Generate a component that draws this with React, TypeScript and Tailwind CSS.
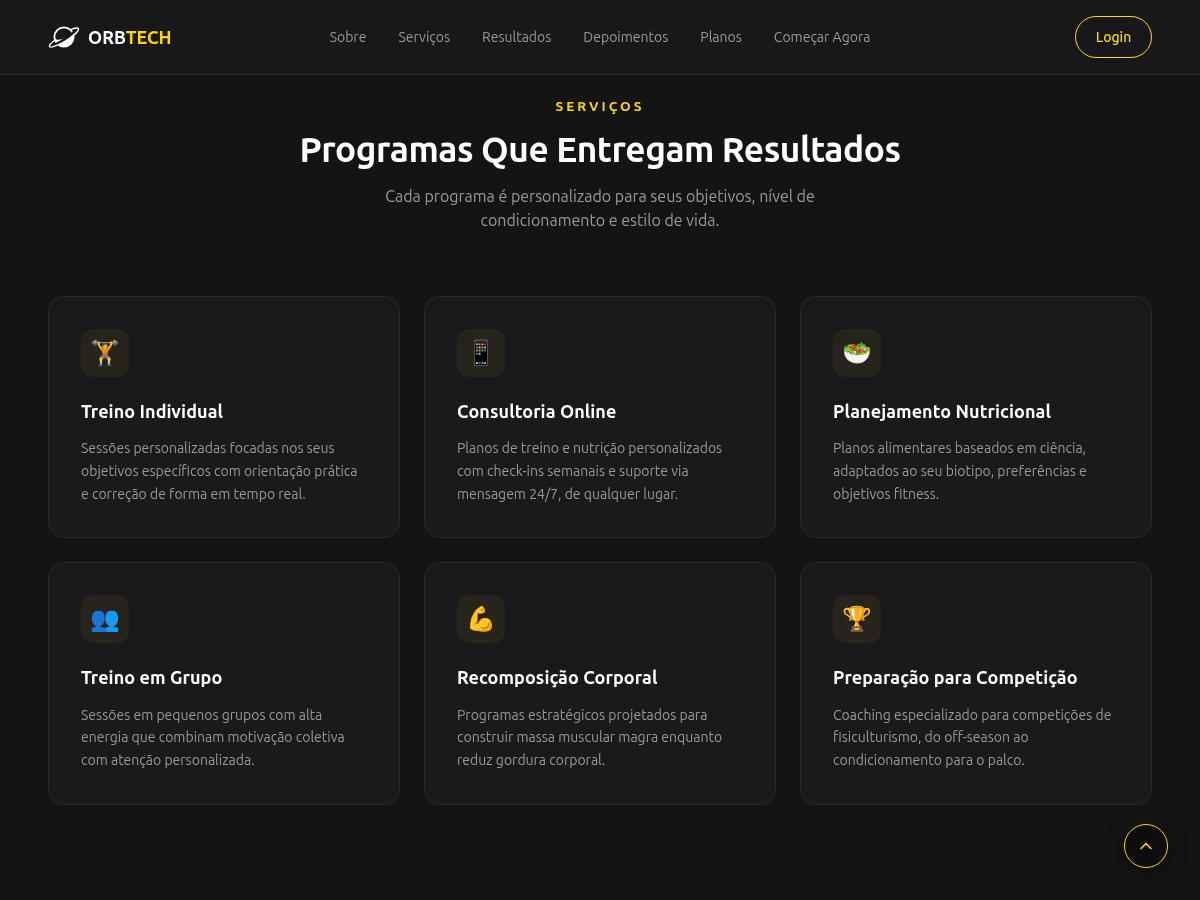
import { ChevronUp } from "lucide-react";

const navLinks = ["Sobre", "Serviços", "Resultados", "Depoimentos", "Planos", "Começar Agora"];

const services = [
  {
    icon: "🏋️",
    title: "Treino Individual",
    text: "Sessões personalizadas focadas nos seus objetivos específicos com orientação prática e correção de forma em tempo real.",
  },
  {
    icon: "📱",
    title: "Consultoria Online",
    text: "Planos de treino e nutrição personalizados com check-ins semanais e suporte via mensagem 24/7, de qualquer lugar.",
  },
  {
    icon: "🥗",
    title: "Planejamento Nutricional",
    text: "Planos alimentares baseados em ciência, adaptados ao seu biotipo, preferências e objetivos fitness.",
  },
  {
    icon: "👥",
    title: "Treino em Grupo",
    text: "Sessões em pequenos grupos com alta energia que combinam motivação coletiva com atenção personalizada.",
  },
  {
    icon: "💪",
    title: "Recomposição Corporal",
    text: "Programas estratégicos projetados para construir massa muscular magra enquanto reduz gordura corporal.",
  },
  {
    icon: "🏆",
    title: "Preparação para Competição",
    text: "Coaching especializado para competições de fisiculturismo, do off-season ao condicionamento para o palco.",
  },
];

function PlanetLogo() {
  return (
    <svg width="32" height="24" viewBox="0 0 32 24" fill="none">
      <circle cx="16" cy="12" r="9.6" stroke="#fff" strokeWidth="1.8" />
      <path d="M6.5 14 C12 16 20 13 25.5 8 C27 15 22 22 15.5 22 C11 22 8 18.5 6.5 14Z" fill="#fff" />
      <path d="M3 20.5 C10 19.5 22 12 29 4" stroke="#18181a" strokeWidth="2.6" />
      <path
        d="M6.5 15.5 C3 18 0.8 20.5 1.6 21.6 C3 23.4 13 19 20 14.5 C26 10.5 31.2 5.5 30.4 3.6 C29.9 2.5 27 2.8 23.5 4.4"
        stroke="#fff"
        strokeWidth="1.4"
        strokeLinecap="round"
      />
    </svg>
  );
}

export default function App() {
  return (
    <div className="relative h-[900px] overflow-hidden bg-[#141415] font-['Ubuntu','Open_Sans',sans-serif] text-white">
      <header className="grid h-[75px] grid-cols-[1fr_auto_1fr] items-center border-b border-[#2a2a2c] bg-[#18181a] px-12 will-change-transform">
        <div className="flex items-center gap-2">
          <PlanetLogo />
          <span className="text-lg font-bold">
            ORB<span className="text-[#ffd700]">TECH</span>
          </span>
        </div>
        <nav className="flex items-center gap-8 text-sm text-[#999]">
          {navLinks.map((link) => (
            <a key={link}>{link}</a>
          ))}
        </nav>
        <button className="h-[42px] w-[77px] justify-self-end rounded-full border border-[#ffd700] text-sm font-medium text-[#ffd700]">
          Login
        </button>
      </header>

      <main className="px-12 will-change-transform">
        <div className="pt-[21px] text-center">
          <p className="text-[13.6px] leading-5 font-bold tracking-[3px] text-[#ffd700]">SERVIÇOS</p>
          <h2 className="mt-[11px] text-[35.2px] leading-[44px] font-bold tracking-[-0.44px]">
            Programas Que Entregam Resultados
          </h2>
          <p className="mx-auto mt-[13px] w-[500px] text-base leading-6 text-[#999]">
            Cada programa é personalizado para seus objetivos, nível de condicionamento e estilo de vida.
          </p>
        </div>

        <div className="mt-[64px] grid grid-cols-3 gap-6">
          {services.map((service) => (
            <div key={service.title} className="rounded-2xl border border-[#2a2a2c] bg-[#1a1a1c] p-8">
              <div className="flex size-12 items-center justify-center rounded-xl bg-[#26241b] text-2xl">
                {service.icon}
              </div>
              <h3 className="mt-5 text-lg leading-7 font-bold tracking-[0.08px]">{service.title}</h3>
              <p className="mt-[12.2px] text-sm leading-[22.75px] text-[#999]">{service.text}</p>
            </div>
          ))}
        </div>
      </main>

      <button className="absolute right-8 bottom-8 flex size-11 items-center justify-center rounded-full border border-[#ffd700] bg-[#0d0d0d] text-[#ffd700] shadow-[0_4px_20px_rgba(0,0,0,0.4)]">
        <ChevronUp size={20} />
      </button>
    </div>
  );
}
